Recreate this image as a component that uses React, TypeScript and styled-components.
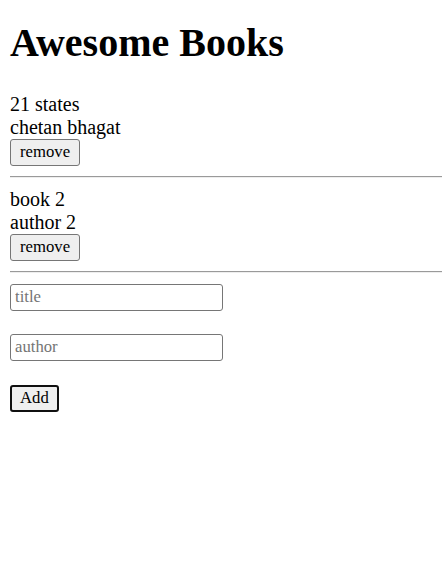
import React from 'react';
import styled, { createGlobalStyle } from 'styled-components';

const GlobalStyle = createGlobalStyle`
  body {
    margin: 0;
    font-family: 'Liberation Serif', 'Times New Roman', serif;
    font-size: 20px;
    color: #000;
    background: #fff;
  }
`;

const Page = styled.main`
  padding: 0 0 10px 10px;
  overflow: hidden;
`;

const Title = styled.h1`
  font-size: 40px;
  font-weight: bold;
  margin: 19px 0 26.8px;
`;

const BookList = styled.section`
  display: flex;
  flex-direction: column;
`;

const Book = styled.div`
  display: flex;
  flex-direction: column;
  align-items: flex-start;
`;

const Line = styled.span`
  line-height: 23px;
`;

const Button = styled.button<{ focused?: boolean }>`
  font-family: 'Liberation Serif', 'Times New Roman', serif;
  font-size: 16.7px;
  height: 27px;
  padding: 0 ${({ focused }) => (focused ? '8px' : '9px')};
  margin-top: ${({ focused }) => (focused ? '1px' : '0')};
  background: #efefef;
  color: #000;
  border: ${({ focused }) => (focused ? '2px solid #101010' : '1px solid #767676')};
  border-radius: 3px;
`;

const Divider = styled.hr`
  box-sizing: border-box;
  width: 100%;
  margin: 10px 0;
  border: none;
  border-top: 1px solid #9a9a9a;
  border-bottom: 1px solid #eeeeee;
  height: 2px;
`;

const Form = styled.form`
  display: flex;
  flex-direction: column;
  align-items: flex-start;
  gap: 23px;
  padding-top: 1px;
`;

const Field = styled.input`
  box-sizing: border-box;
  width: 213px;
  height: 27px;
  padding: 0 4px;
  font-family: 'Liberation Serif', 'Times New Roman', serif;
  font-size: 16.7px;
  border: 1px solid #767676;
  border-radius: 3px;
  &::placeholder {
    color: #757575;
  }
`;

const books = [
  { title: '21 states', author: 'chetan bhagat' },
  { title: 'book 2', author: 'author 2' },
];

export default function App() {
  return (
    <Page>
      <GlobalStyle />
      <Title>Awesome Books</Title>
      <BookList>
        {books.map((b) => (
          <Book key={b.title}>
            <Line>{b.title}</Line>
            <Line>{b.author}</Line>
            <Button type="button">remove</Button>
            <Divider />
          </Book>
        ))}
      </BookList>
      <Form onSubmit={(e) => e.preventDefault()}>
        <Field placeholder="title" />
        <Field placeholder="author" />
        <Button type="submit" focused>
          Add
        </Button>
      </Form>
    </Page>
  );
}
